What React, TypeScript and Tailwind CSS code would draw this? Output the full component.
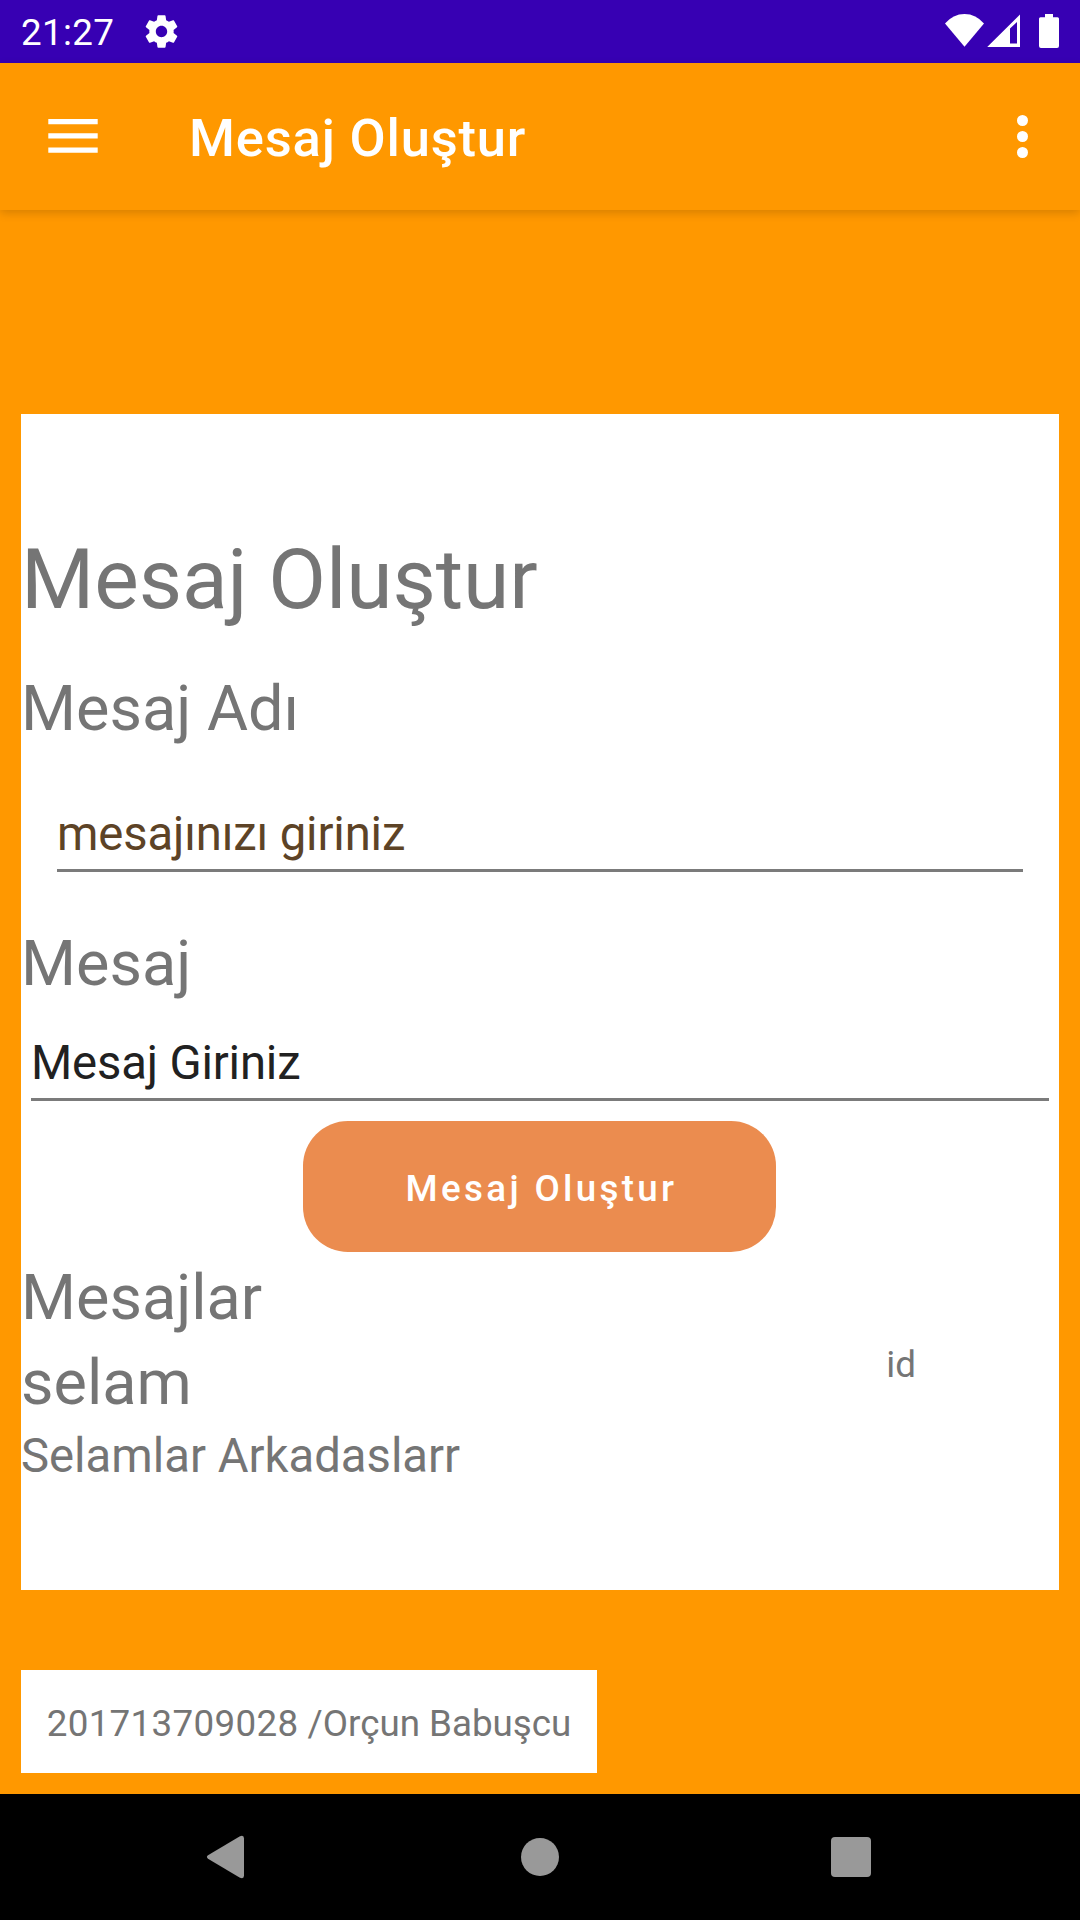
const label = "text-[63px] leading-[74px] text-[#757575]";

function StatusBar() {
  return (
    <div className="flex h-[63px] shrink-0 items-center justify-between bg-[#3700b3] pl-[21px] text-white">
      <div className="flex items-center gap-[27.5px]">
        <span className="pt-[2px] text-[36.75px] leading-[63px] tracking-[0.01em]">21:27</span>
        <svg className="size-[39px]" viewBox="0 0 24 24" fill="currentColor">
          <path d="M19.43 12.98c.04-.32.07-.64.07-.98s-.03-.66-.07-.98l2.11-1.65c.19-.15.24-.42.12-.64l-2-3.46c-.12-.22-.39-.3-.61-.22l-2.49 1c-.52-.4-1.08-.73-1.69-.98l-.38-2.65A.49.49 0 0 0 14 2h-4c-.25 0-.46.18-.49.42l-.38 2.65c-.61.25-1.17.59-1.69.98l-2.49-1c-.23-.09-.49 0-.61.22l-2 3.46c-.13.22-.07.49.12.64l2.11 1.65c-.04.32-.07.65-.07.98s.03.66.07.98l-2.11 1.65c-.19.15-.24.42-.12.64l2 3.46c.12.22.39.3.61.22l2.49-1c.52.4 1.08.73 1.69.98l.38 2.65c.03.24.24.42.49.42h4c.25 0 .46-.18.49-.42l.38-2.65c.61-.25 1.17-.59 1.69-.98l2.49 1c.23.09.49 0 .61-.22l2-3.46c.12-.22.07-.49-.12-.64l-2.11-1.65zM12 15.5c-1.93 0-3.5-1.57-3.5-3.5s1.57-3.5 3.5-3.5 3.5 1.57 3.5 3.5-1.57 3.5-3.5 3.5z" />
        </svg>
      </div>
      <svg className="h-[63px] w-[140px]" viewBox="940 0 140 63" fill="currentColor">
        <path d="M945 23.5Q953 14 964.500 14T984 23.500L964.500 46.700Z" />
        <path fillRule="evenodd" d="M1020 14.500V47H987.200ZM1010 28.500V43.500H1017V22Z" />
        <path d="M1045 14h8v3.300h4.500a1.500 1.500 0 0 1 1.500 1.500V46a2 2 0 0 1-2 2h-16a2 2 0 0 1-2-2V18.800a1.500 1.500 0 0 1 1.500-1.500h4.500Z" />
      </svg>
    </div>
  );
}

function AppBar() {
  return (
    <header className="flex h-[147px] shrink-0 items-center bg-[#ff9800] pl-[48px] text-white shadow-[0_3px_9px_rgba(0,0,0,0.16)]">
      <svg className="-mt-[1px] h-[34px] w-[50px]" viewBox="0 0 50 34" fill="currentColor">
        <path d="M.3 0H49.700V5.300H.3ZM.3 14.200H49.700V19.500H.3ZM.3 28.400H49.700V33.700H.3Z" />
      </svg>
      <h1 className="ml-[91px] flex-1 pt-[3px] text-[52.5px] leading-[62px] font-medium tracking-[0.82px]">Mesaj Oluştur</h1>
      <div className="mr-[52px] mb-[1px] flex flex-col gap-[5px]">
        <span className="size-[11px] rounded-full bg-white" />
        <span className="size-[11px] rounded-full bg-white" />
        <span className="size-[11px] rounded-full bg-white" />
      </div>
    </header>
  );
}

function NavBar() {
  return (
    <nav className="flex h-[126px] shrink-0 items-center bg-black text-[#999999]">
      <svg className="ml-[206px] h-[44px] w-[39px]" viewBox="0 0 39 44" fill="currentColor">
        <path d="M2 20.300 33.500 1.500Q38 -.5 38 3.500V40.500Q38 44.500 33.500 42.500L2 23.700Q-.2 22 2 20.300Z" />
      </svg>
      <span className="ml-[275.500px] size-[38.500px] rounded-full bg-[#999999]" />
      <span className="ml-[271.500px] size-[40px] rounded-[4px] bg-[#999999]" />
    </nav>
  );
}

export default function App() {
  return (
    <div className="flex h-[1920px] w-[1080px] flex-col overflow-hidden bg-[#ff9800] font-['Roboto',sans-serif]">
      <StatusBar />
      <AppBar />
      <main className="flex flex-1 flex-col items-start px-[21px] pt-[204px]">
        <section className="flex h-[1176px] w-full flex-col bg-white pt-[117px]">
          <h2 className="text-[84px] leading-[98px] tracking-[-0.1px] text-[#757575]">Mesaj Oluştur</h2>
          <p className={`mt-[43px] ${label}`}>Mesaj Adı</p>
          <div className="mx-[36px] mt-[60px] border-b-3 border-[#7b7b7b] pb-[7px] text-[47.25px] leading-[56px] tracking-[-0.14px] text-[#5d4326]">
            mesajınızı giriniz
          </div>
          <p className={`mt-[55px] ${label}`}>Mesaj</p>
          <div className="mx-[10px] mt-[34px] border-b-3 border-[#7b7b7b] pb-[7px] text-[47.25px] leading-[56px] tracking-[-0.17px] text-[#212121]">
            Mesaj Giriniz
          </div>
          <button className="mt-[20px] ml-[282px] h-[131px] w-[473px] rounded-[45px] bg-[#eb8c4f] pt-[5px] pl-[4px] text-[36.75px] leading-[44px] font-medium tracking-[3.32px] text-white">
            Mesaj Oluştur
          </button>
          <p className={`mt-[9px] ${label}`}>Mesajlar</p>
          <div className="mt-[11px] flex items-start justify-between pr-[143px]">
            <span className={label}>selam</span>
            <span className="-mt-[3px] text-[36.75px] leading-[44px] text-[#757575]">id</span>
          </div>
          <p className="mt-[8px] text-[47.25px] leading-[56px] text-[#757575]">Selamlar Arkadaslarr</p>
        </section>
        <footer className="mt-[80px] h-[103px] w-[576px] bg-white pt-[31.5px] text-center text-[36.75px] leading-[44px] text-[#757575]">
          <span className="tracking-[0.33px]">201713709028</span> /Orçun Babuşcu
        </footer>
      </main>
      <NavBar />
    </div>
  );
}
